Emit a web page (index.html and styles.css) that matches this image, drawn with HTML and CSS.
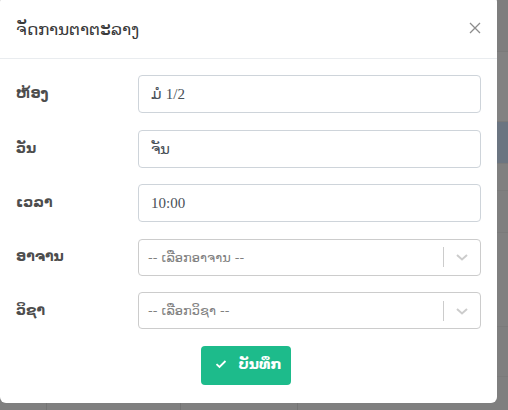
FILE: index.html
```html
<!DOCTYPE html>
<html lang="lo">
<head>
<meta charset="utf-8">
<link rel="stylesheet" href="styles.css">
</head>
<body>
<div class="page">
  <div class="bg-row r1"></div>
  <div class="bg-row r2"></div>
  <div class="bg-row r3 active"></div>
  <div class="bg-row r4"></div>
  <div class="bg-row r5"></div>
  <div class="bg-row r6"></div>
  <div class="bg-row r7"></div>
  <div class="bg-foot">
    <span class="col c1"></span><span class="col c2"></span><span class="col c3"></span>
  </div>
</div>
<div class="modal">
  <div class="modal-header">
    <h5 class="modal-title">ຈັດການຕາຕະລາງ</h5>
    <svg class="close" width="12" height="12" viewBox="0 0 12 12"><path d="M1 1 L11 11 M11 1 L1 11" stroke="#8c8c8c" stroke-width="1.3" fill="none"/></svg>
  </div>
  <div class="modal-body">
    <div class="form-row">
      <label class="label">ຫ້ອງ</label>
      <div class="input">ມໍ 1/2</div>
    </div>
    <div class="form-row">
      <label class="label">ວັນ</label>
      <div class="input">ຈັນ</div>
    </div>
    <div class="form-row">
      <label class="label">ເວລາ</label>
      <div class="input">10:00</div>
    </div>
    <div class="form-row">
      <label class="label">ອາຈານ</label>
      <div class="select">
        <span class="placeholder">-- ເລືອກອາຈານ --</span>
        <span class="sep"></span>
        <svg class="chev" width="14" height="10" viewBox="0 0 14 10"><path d="M2 3 L7 7.5 L12 3" fill="none" stroke="#cccccc" stroke-width="2"/></svg>
      </div>
    </div>
    <div class="form-row">
      <label class="label">ວິຊາ</label>
      <div class="select">
        <span class="placeholder">-- ເລືອກວິຊາ --</span>
        <span class="sep"></span>
        <svg class="chev" width="14" height="10" viewBox="0 0 14 10"><path d="M2 3 L7 7.5 L12 3" fill="none" stroke="#cccccc" stroke-width="2"/></svg>
      </div>
    </div>
    <div class="actions">
      <button class="btn">
        <svg class="check" width="12" height="10" viewBox="0 0 12 10"><path d="M1.5 5.2 L4.5 8 L10.5 2" fill="none" stroke="#ffffff" stroke-width="1.8"/></svg>
        <span>ບັນທຶກ</span>
      </button>
    </div>
  </div>
</div>
</body>
</html>
```

FILE: styles.css
```css
* { box-sizing: border-box; }
html, body { margin: 0; padding: 0; }
body {
  width: 508px;
  height: 410px;
  overflow: hidden;
  background: #7f7f7f;
  font-family: "DejaVu Sans", "Noto Sans", sans-serif;
  position: relative;
}
.page { display: flex; flex-direction: column; }
.bg-row { border-bottom: 1px solid #7a7a7a; }
.r1 { height: 52px; background: #7e7e7e; }
.r2 { height: 70px; background: #828282; }
.r3 { height: 42px; }
.active { background: #6b7581; }
.r4 { height: 27px; background: #808080; }
.r5 { height: 42px; background: #7f7f7f; }
.r6 { height: 94px; background: #808080; }
.r7 { height: 50px; background: #7f7f7f; }
.bg-foot { height: 40px; position: relative; }
.col { position: absolute; top: 0; bottom: 0; width: 1px; background: #747474; }
.c1 { left: 46px; } .c2 { left: 180px; } .c3 { left: 297px; }

.modal {
  position: absolute;
  left: 0;
  top: -4px;
  width: 497px;
  height: 407px;
  background: #ffffff;
  border-radius: 6px;
  display: flex;
  flex-direction: column;
}
.modal-header {
  height: 63px;
  border-bottom: 1px solid #e9ecef;
  display: flex;
  align-items: center;
  justify-content: space-between;
  padding: 4px 16px 0 16px;
}
.modal-title {
  margin: 0;
  font-family: "DejaVu Sans", sans-serif;
  font-weight: 200;
  font-size: 17px;
  color: #3a3a3a;
}
.close {
  margin-right: 0;
  margin-top: -2px;
}
.modal-body {
  padding: 16px 16px 0 16px;
  display: flex;
  flex-direction: column;
  gap: 16.5px;
}
.form-row {
  display: flex;
  align-items: center;
}
.label {
  width: 122px;
  flex: none;
  font-family: "DejaVu Sans", sans-serif;
  font-weight: bold;
  font-size: 14px;
  color: #4d4d4d;
  padding-bottom: 2px;
}
.input {
  flex: 1;
  height: 38px;
  border: 1px solid #ced4da;
  border-radius: 4px;
  padding: 0 12px;
  display: flex;
  align-items: center;
  font-family: "Liberation Serif", "DejaVu Serif", serif;
  font-size: 15px;
  color: #495057;
}
.select {
  flex: 1;
  height: 37px;
  border: 1px solid #cccccc;
  border-radius: 4px;
  display: flex;
  align-items: center;
  padding-left: 9px;
}
.placeholder {
  flex: 1;
  font-family: "DejaVu Sans", sans-serif;
  font-size: 13px;
  color: #808080;
}
.sep {
  width: 1px;
  height: 20px;
  background: #cccccc;
}
.chev { margin: 0 11px 0 11px; }
.actions {
  display: flex;
  justify-content: center;
  padding-right: 5px;
}
.btn {
  width: 90px;
  height: 39px;
  border: none;
  border-radius: 4px;
  background: #1dbb8b;
  color: #ffffff;
  display: flex;
  align-items: center;
  justify-content: center;
  gap: 12px;
  font-family: "DejaVu Sans", sans-serif;
  font-weight: bold;
  font-size: 14px;
  padding: 0 0 2px 4px;
}
```
